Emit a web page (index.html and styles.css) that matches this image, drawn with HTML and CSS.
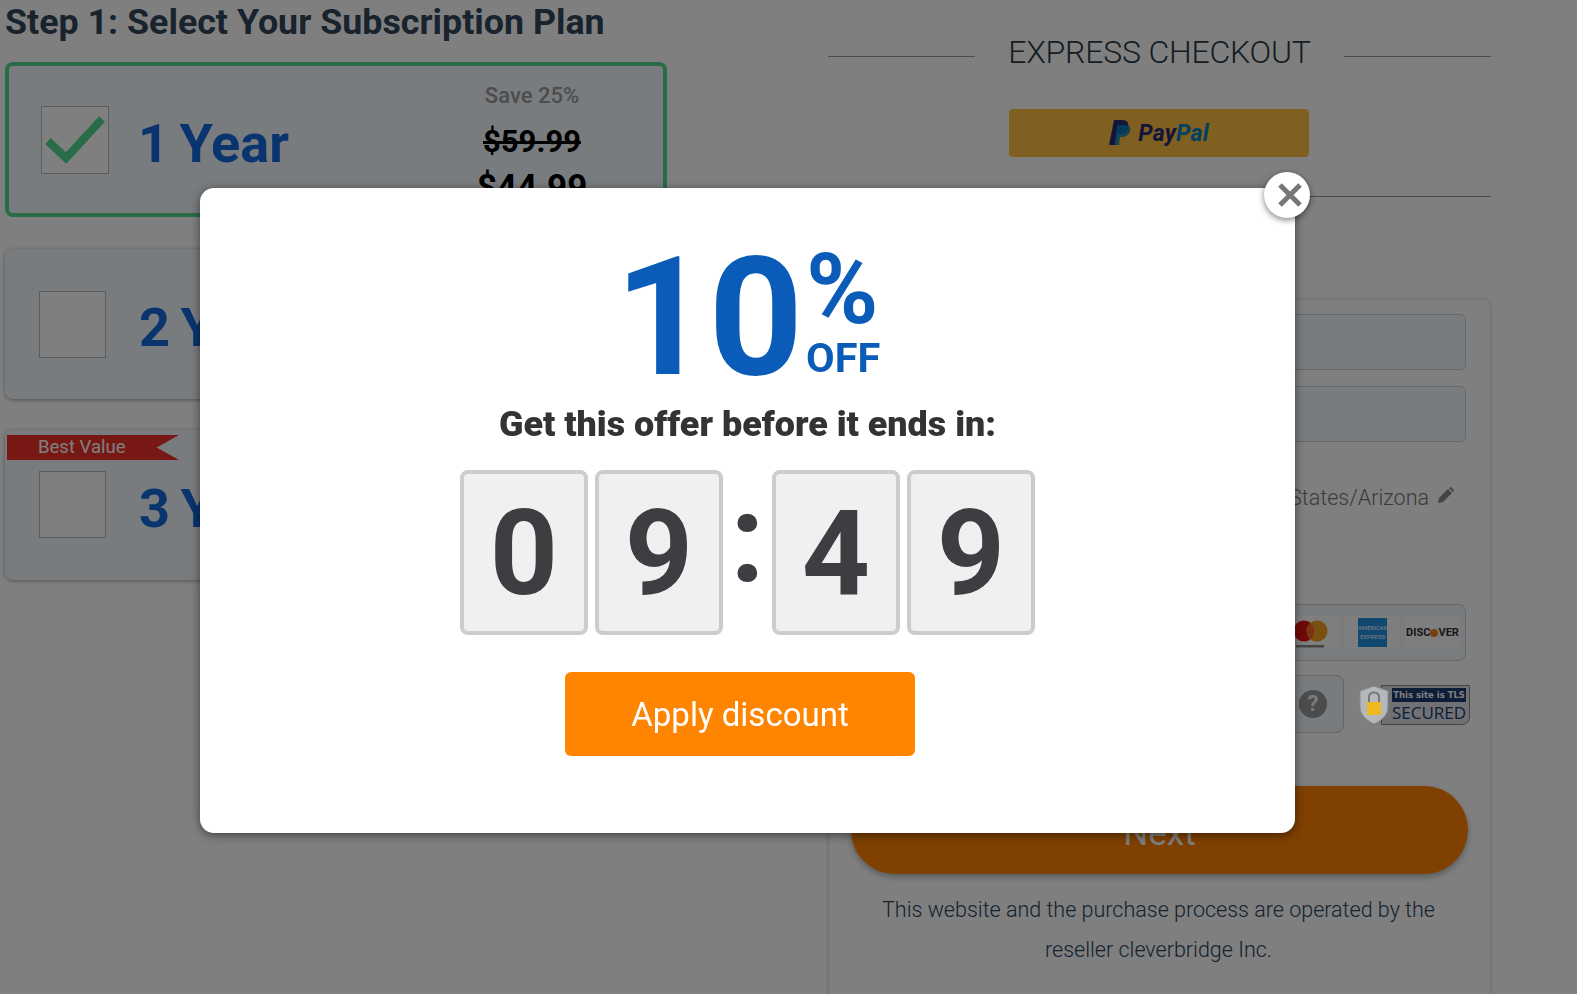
FILE: index.html
```html
<!DOCTYPE html>
<html lang="en">
<head>
    <meta charset="UTF-8">
    <title>Select Your Subscription Plan</title>
    <link rel="stylesheet" href="styles.css">
</head>
<body>
    <div class="page">
        <div class="plans">
            <h1>Step 1: Select Your Subscription Plan</h1>

            <div class="plan plan-selected">
                <div class="check">
                    <svg width="62" height="50" viewBox="0 0 62 50"><path d="M4 26 L22 43 L58 4" fill="none" stroke="#50d890" stroke-width="8"/></svg>
                </div>
                <div class="plan-name">1 Year</div>
                <div class="plan-price">
                    <div class="save">Save 25%</div>
                    <div class="old-price">$59.99</div>
                    <div class="new-price">$44.99</div>
                </div>
            </div>

            <div class="plan plan-two">
                <div class="check"></div>
                <div class="plan-name">2 Year</div>
            </div>

            <div class="plan plan-three">
                <div class="ribbon">Best Value</div>
                <div class="check"></div>
                <div class="plan-name">3 Year</div>
            </div>
        </div>

        <div class="checkout">
            <div class="express">
                <span class="rule"></span>
                <span class="express-title">EXPRESS CHECKOUT</span>
                <span class="rule"></span>
            </div>
            <div class="paypal">
                <svg width="22" height="26" viewBox="0 0 22 26">
                    <path d="M5 0 H14 C19 0 20 4 19 8 C18 12 14 14 10 14 H8 L6 25 H0 Z" fill="#2a2a78"/>
                    <path d="M8 5 H16 C21 5 22 8 21 11 C20 15 16 17 13 17 H11 L10 25 H6 Z" fill="#0080c0" opacity="0.85"/>
                </svg>
                <span class="paypal-text"><span class="pay">Pay</span><span class="pal">Pal</span></span>
            </div>
            <div class="long-rule"></div>

            <div class="panel">
                <div class="field"></div>
                <div class="field"></div>
                <div class="location">
                    United States/Arizona
                    <svg class="pencil" width="17" height="17" viewBox="0 0 17 17">
                        <path d="M1 16 L2 11 L11 2 L15 6 L6 15 Z" fill="#8a8a8a"/>
                        <path d="M12 1 L14 0 L17 3 L16 5 Z" fill="#8a8a8a"/>
                    </svg>
                </div>
                <div class="card-row">
                    <div class="card-logo">
                        <svg class="mastercard" width="36" height="30" viewBox="0 0 36 30">
                            <circle cx="11" cy="11" r="10.5" fill="#e01010"/>
                            <circle cx="24" cy="11" r="10.5" fill="#f5a020"/>
                            <path d="M17.5 3 A10.5 10.5 0 0 1 17.5 19 A10.5 10.5 0 0 1 17.5 3 Z" fill="#f56a20"/>
                            <rect x="3" y="25" width="28" height="2.5" fill="#888"/>
                        </svg>
                    </div>
                    <div class="card-logo">
                        <div class="amex">AMERICAN EXPRESS</div>
                    </div>
                    <div class="card-logo discover">DISC<span class="dot"></span>VER</div>
                </div>
                <div class="cvv-row">
                    <div class="cvv"><span class="help">?</span></div>
                    <div class="tls">
                        <svg class="shield" width="30" height="40" viewBox="0 0 30 40">
                            <path d="M15 1 L29 6 V22 C29 31 21 36 15 39 C9 36 1 31 1 22 V6 Z" fill="#b4b8bc" stroke="#888"/>
                            <rect x="8" y="17" width="14" height="13" fill="#f0b820"/>
                            <path d="M10 17 V12 C10 6 20 6 20 12 V17" fill="none" stroke="#777" stroke-width="2"/>
                        </svg>
                        <div class="tls-box">
                            <div class="tls-top">This site is TLS</div>
                            <div class="tls-bottom">SECURED</div>
                        </div>
                    </div>
                </div>
                <div class="next">Next</div>
                <p class="operated">This website and the purchase process are operated by the<br>reseller cleverbridge Inc.</p>
            </div>
        </div>
    </div>

    <div class="overlay"></div>

    <div class="modal">
        <div class="close">
            <svg width="26" height="24" viewBox="0 0 26 24"><path d="M3 2 L23 22 M23 2 L3 22" stroke="#777" stroke-width="5" fill="none"/></svg>
        </div>
        <div class="discount">
            <div class="discount-num">10</div>
            <div class="discount-side">
                <div class="percent">%</div>
                <div class="off">OFF</div>
            </div>
        </div>
        <div class="offer">Get this offer before it ends in:</div>
        <div class="timer">
            <div class="digit">0</div>
            <div class="digit">9</div>
            <div class="colon">:</div>
            <div class="digit">4</div>
            <div class="digit">9</div>
        </div>
        <div class="apply">Apply discount</div>
    </div>
</body>
</html>
```

FILE: styles.css
```css
html, body {
    margin: 0;
    height: 994px;
    overflow: hidden;
    background: white;
    font-family: Roboto, Arial, sans-serif;
}
.page {
    display: flex;
    padding-left: 5px;
    gap: 161px;
}
.plans {
    width: 662px;
}
h1 {
    margin: 0;
    height: 62px;
    font-size: 35.8px;
    line-height: 44px;
    font-weight: 700;
    color: #30465c;
}
.plan {
    position: relative;
    display: flex;
    align-items: center;
    box-sizing: border-box;
    background: #f2f8ff;
    border-radius: 8px;
    box-shadow: 0 1px 4px rgba(0,0,0,0.35);
    padding-left: 34px;
    margin-bottom: 31px;
    height: 150px;
}
.plan-selected {
    border: 4px solid #50d890;
    height: 155px;
    margin-bottom: 32px;
    padding-left: 32px;
    box-shadow: none;
}
.plan-selected .check {
    width: 68px;
    height: 68px;
}
.plan-selected .plan-name {
    margin-left: 29px;
}
.plan-three .check {
    margin-top: -2px;
}
.check {
    width: 67px;
    height: 67px;
    box-sizing: border-box;
    border: 1px solid #b8b8b8;
    background: #fff;
    flex: none;
    display: flex;
    align-items: center;
    justify-content: center;
}
.plan-name {
    margin-left: 33px;
    padding-top: 7px;
    font-size: 54px;
    font-weight: 700;
    color: #1268dc;
    word-spacing: -3px;
}
.plan-price {
    position: absolute;
    right: 71px;
    top: 13px;
    text-align: center;
    width: 120px;
}
.save {
    font-size: 22px;
    font-weight: 500;
    color: #999;
    line-height: 34px;
}
.old-price {
    font-size: 31px;
    font-weight: 700;
    color: #000;
    text-decoration: line-through;
    margin-top: 10px;
    line-height: 38px;
}
.new-price {
    font-size: 35px;
    font-weight: 700;
    color: #000;
    margin-top: 7px;
    line-height: 40px;
}
.ribbon {
    position: absolute;
    left: 2px;
    top: 5px;
    width: 172px;
    height: 25px;
    box-sizing: border-box;
    padding-left: 31px;
    background: #f03028;
    clip-path: polygon(0 0, 100% 0, 87% 50%, 100% 100%, 0 100%);
    color: #fff;
    font-size: 18.5px;
    line-height: 25px;
}
.checkout {
    width: 663px;
}
.express {
    display: flex;
    align-items: center;
    justify-content: space-between;
    padding-top: 32px;
    height: 45px;
}
.rule {
    width: 147px;
    height: 1px;
    background: #999;
    margin-top: 4px;
}
.express-title {
    margin-top: -6px;
    font-size: 32px;
    font-weight: 300;
    color: #2a3a46;
    letter-spacing: -0.2px;
}
.paypal {
    width: 300px;
    height: 48px;
    margin: 32px 0 0 181px;
    background: #ffc040;
    border-radius: 4px;
    display: flex;
    align-items: center;
    justify-content: center;
    gap: 7px;
}
.paypal-text {
    font-size: 23px;
    font-weight: 700;
    font-style: italic;
    letter-spacing: 0.2px;
}
.pay {
    color: #2a2a78;
}
.pal {
    color: #0080c0;
}
.long-rule {
    height: 1px;
    background: #999;
    margin-top: 39px;
}
.panel {
    margin-top: 101px;
    height: 720px;
    box-sizing: border-box;
    border: 2px solid #f0f0f0;
    border-radius: 8px;
    box-shadow: 0 1px 3px rgba(0,0,0,0.2);
    padding: 14px 23px 0 21px;
}
.field {
    height: 56px;
    box-sizing: border-box;
    background: #f2f8ff;
    border: 1px solid #ccc;
    border-radius: 6px;
    margin-bottom: 16px;
}
.location {
    display: flex;
    justify-content: flex-end;
    align-items: center;
    gap: 8px;
    margin-top: 42px;
    padding-right: 12px;
    font-size: 21.5px;
    font-weight: 300;
    color: #777;
    line-height: 28px;
}
.pencil {
    margin-top: -6px;
}
.card-row {
    height: 57px;
    box-sizing: border-box;
    margin-top: 92px;
    background: #f2f8ff;
    border: 1px solid #ccc;
    border-radius: 8px;
    display: flex;
    justify-content: flex-end;
    align-items: center;
    gap: 5px;
    padding-right: 5px;
}
.card-logo {
    width: 55px;
    height: 33px;
    display: flex;
    align-items: center;
    justify-content: center;
    background: #fcfcfc;
}
.mastercard {
    margin: 5px 3px 0 0;
}
.amex {
    width: 29px;
    height: 29px;
    background: #2090e0;
    color: #fff;
    font-size: 6px;
    line-height: 9px;
    text-align: center;
    padding-top: 5px;
    box-sizing: border-box;
}
.discover {
    font-size: 11px;
    font-weight: 700;
    color: #303030;
}
.dot {
    display: inline-block;
    width: 8px;
    height: 8px;
    border-radius: 50%;
    background: #f08020;
}
.cvv-row {
    display: flex;
    align-items: center;
    margin-top: 14px;
    height: 58px;
}
.cvv {
    width: 508px;
    height: 58px;
    box-sizing: border-box;
    background: #f2f8ff;
    border: 1px solid #ccc;
    border-radius: 8px;
    display: flex;
    align-items: center;
    justify-content: flex-end;
    padding-right: 16px;
}
.help {
    width: 28px;
    height: 28px;
    border-radius: 50%;
    background: #999;
    color: #f2f8ff;
    font-size: 22px;
    font-weight: 700;
    line-height: 28px;
    text-align: center;
}
.tls {
    display: flex;
    align-items: center;
    margin-left: 15px;
    margin-top: 2px;
    width: 107px;
    flex: none;
}
.shield {
    flex: none;
    position: relative;
    z-index: 1;
}
.tls-box {
    margin-left: -8px;
    flex: 1;
    height: 40px;
    box-sizing: border-box;
    border: 1px solid #888;
    border-radius: 0 0 8px 0;
    background: #dfe3e8;
    padding: 2px 3px 0 10px;
}
.tls-top {
    background: #1c3a70;
    color: #fff;
    font-family: "DejaVu Sans", sans-serif;
    font-size: 8.5px;
    font-weight: 700;
    line-height: 14px;
    text-align: center;
    white-space: nowrap;
}
.tls-bottom {
    color: #1c3a70;
    font-family: "Open Sans", sans-serif;
    font-size: 17px;
    line-height: 21px;
    text-align: center;
}
.next {
    height: 88px;
    margin-top: 53px;
    margin-right: -2px;
    background: #ff8000;
    border-radius: 44px;
    box-shadow: 0 3px 6px rgba(0,0,0,0.3);
    color: #fff;
    font-size: 35px;
    line-height: 95px;
    text-align: center;
}
.operated {
    margin: 16px 0 0;
    font-size: 21.5px;
    font-weight: 300;
    line-height: 40px;
    text-align: center;
    color: #2a4460;
}
.overlay {
    position: fixed;
    inset: 0;
    background: rgba(0,0,0,0.5);
}
.modal {
    position: absolute;
    left: 200px;
    top: 188px;
    width: 1095px;
    height: 645px;
    box-sizing: border-box;
    background: white;
    border-radius: 14px;
    box-shadow: 0 2px 10px rgba(0,0,0,0.5);
    display: flex;
    flex-direction: column;
    align-items: center;
    padding-top: 58px;
}
.close {
    position: absolute;
    right: -15px;
    top: -16px;
    width: 46px;
    height: 46px;
    border-radius: 50%;
    background: white;
    box-shadow: 0 2px 6px rgba(0,0,0,0.5);
    display: flex;
    align-items: center;
    justify-content: center;
}
.close svg {
    margin-left: 6px;
}
.discount {
    display: flex;
    color: #0a5cb8;
    height: 141px;
}
.discount-num {
    font-size: 165px;
    font-weight: 700;
    line-height: 144px;
    letter-spacing: -1px;
}
.discount-side {
    margin-left: 4px;
    margin-top: -4px;
}
.percent {
    font-size: 98px;
    font-weight: 700;
    line-height: 96px;
}
.off {
    margin-top: -1px;
    font-size: 41.5px;
    font-weight: 700;
    line-height: 42px;
}
.offer {
    margin-top: 14px;
    font-size: 35.9px;
    font-weight: 900;
    line-height: 46px;
    color: #333;
}
.timer {
    display: flex;
    align-items: center;
    margin-top: 23px;
    gap: 7px;
}
.digit {
    width: 128px;
    height: 165px;
    box-sizing: border-box;
    border: 4px solid #ccc;
    border-radius: 8px;
    background: #f0f0f0;
    color: #3e3e42;
    font-size: 119px;
    font-weight: 700;
    line-height: 160px;
    text-align: center;
}
.colon {
    width: 35px;
    margin-top: -28px;
    text-align: center;
    color: #3e3e42;
    font-size: 124px;
    font-weight: 700;
    line-height: 157px;
}
.apply {
    align-self: flex-start;
    margin-left: 365px;
    margin-top: 37px;
    width: 350px;
    height: 84px;
    background: #ff8500;
    border-radius: 6px;
    color: white;
    font-size: 33px;
    line-height: 86px;
    text-align: center;
}
```
